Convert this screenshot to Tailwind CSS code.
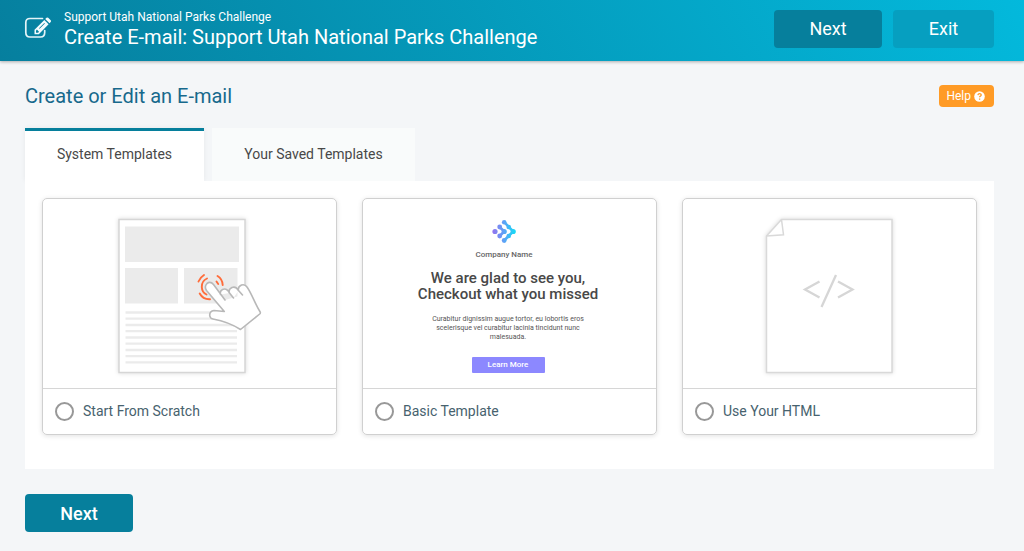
<!DOCTYPE html>
<html lang="en">
<head>
<meta charset="utf-8">
<meta name="viewport" content="width=device-width, initial-scale=1">
<title>Create E-mail</title>
<script src="https://cdn.jsdelivr.net/npm/@tailwindcss/browser@4"></script>
</head>
<body class="min-h-screen bg-[#f4f6f8] font-['Roboto',sans-serif] text-[#484848]">
<header class="flex h-[61px] items-center bg-linear-[60deg] from-[#067f9e] to-[#03b9dc] pr-[30px] pl-6 text-white shadow-[0_1px_3px_rgba(0,0,0,0.3)]">
  <svg class="mr-3 mb-1 h-7 w-7 shrink-0" viewBox="0 0 28 28" fill="none" aria-hidden="true">
    <path d="M18.500 3.500H6Q1.800 3.500 1.800 7.500V17.500Q1.800 22 6 22H16.500Q20.700 22 20.700 17.500V15.500" stroke="#e4f4f8" stroke-width="1.700" stroke-linecap="round"/>
    <path fill="#f3fbfd" fill-rule="evenodd" d="M10.500 19.300V14.800L20.300 5L24.600 9.300L14.800 19.300ZM12 15.700V17.700H14.100L15 16.700L12.900 14.600ZM15 13.200L20.300 8L20.900 8.600L15.600 13.800Z"/>
    <path fill="#f3fbfd" d="M21.200 4.100L22.500 2.800Q23.300 2 24.200 2.800L26.700 5.300Q27.500 6.100 26.700 7L25.500 8.300Z"/>
  </svg>
  <div class="flex-1">
    <p class="text-[12px] leading-4">Support Utah National Parks Challenge</p>
    <h1 class="mb-1 text-[20px] leading-6">Create E-mail: Support Utah National Parks Challenge</h1>
  </div>
  <div class="mb-1 flex gap-[11px] text-[18px]">
    <button type="button" class="h-[38px] w-[108px] rounded bg-[#067f9c]">Next</button>
    <button type="button" class="h-[38px] w-[101px] rounded bg-[#069fc0]">Exit</button>
  </div>
</header>

<main class="pt-[23px] pr-[30px] pb-[19px] pl-[25px]">
  <div class="flex items-center justify-between">
    <h2 class="text-[20px] leading-6 text-[#17698c]">Create or Edit an E-mail</h2>
    <button type="button" class="flex h-[22px] items-center gap-[3px] rounded bg-[#ff9b26] pr-[9px] pl-[7px] text-[12px] text-white">Help
      <svg class="h-[11px] w-[11px]" viewBox="0 0 11 11" fill="none" aria-hidden="true"><circle cx="5.500" cy="5.500" r="5.300" fill="#fff"/><path d="M3.900 4.200Q4.100 2.700 5.600 2.700Q7.200 2.700 7.200 4Q7.200 4.800 6.400 5.200Q5.600 5.600 5.600 6.300M5.600 7.500V8.700" stroke="#ff9b26" stroke-width="1.300"/></svg>
    </button>
  </div>

  <div role="tablist" class="mt-5 flex gap-2 text-[14px]">
    <button role="tab" aria-selected="true" type="button" class="h-[53px] w-[179px] border-t-3 border-[#067f9c] bg-white pb-[3px] shadow-[0_0_5px_rgba(0,0,0,0.06)]">System Templates</button>
    <button role="tab" aria-selected="false" type="button" class="h-[53px] w-[203px] bg-[#f9fbfb]">Your Saved Templates</button>
  </div>

  <section class="relative bg-white px-[17px] pt-[17px] pb-[34px]">
    <div class="grid grid-cols-3 gap-[25px]">
      <label class="rounded-[5px] border border-[#d0d0d0] shadow-[0_1px_5px_rgba(0,0,0,0.12)]">
        <span class="flex h-[189px] items-end justify-center pb-[3px]">
          <svg class="h-[180px] w-[180px]" viewBox="0 0 180 180" fill="none" aria-hidden="true">
            <path d="M19 14.500H145V167.500H19Z" fill="#fff" stroke="#d6d6d6" stroke-width="1.500" class="drop-shadow-[0_0_2px_rgba(0,0,0,0.15)]"/>
            <path d="M25 21.500H139V57H25ZM25 63H78V98.500H25ZM84 63H137.500V98.500H84Z" fill="#ebebeb"/>
            <path d="M25.500 107.500H137M25.500 113.700H137M25.500 120H137M25.500 126.200H137M25.500 132.500H137M25.500 138.700H137M25.500 145H137M25.500 151.200H137M25.500 157.400H137" stroke="#ebebeb" stroke-width="2.300"/>
            <path stroke="#ff6c3a" stroke-width="1.900" stroke-linecap="round" d="M98.500 76.500Q100 72.500 104 70M107 73.500Q101.500 76 101.800 82Q102 87.500 106.500 89.500M99.700 88.500Q103 94.500 110 94.200M117.500 71Q122.500 74 122.700 80M116.500 76.500L118.200 79"/>
            <path transform="translate(0 5)" d="M125 90L113.500 74.500Q110.500 71 107 73.500Q104 76.500 106.500 80.500L124.300 101.500L114 100.500Q109.500 101 109.700 105.500Q110 108.500 113 109Q129 112 140.500 119.500L159.700 104Q160.700 103 160.200 102C155 94 152 84 147 77Q145 74 141.500 75Q137.500 77 138.500 80.500L142.500 85M138.500 80.500Q136 76 132 77.500Q128 79.500 129.500 83L133.500 88M129.500 83Q126.500 77.500 122.500 79.500Q119.500 81 120.500 84.500" fill="#fff" stroke="#b8b8b8" stroke-width="1.600" stroke-linecap="round" stroke-linejoin="round"/>
          </svg>
        </span>
        <span class="flex h-[46px] items-center gap-[9px] border-t border-[#d6d6d6] pl-3 text-[14px] text-[#47626e]">
          <input type="radio" name="template" class="size-[19px] appearance-none rounded-full border-2 border-[#989898] bg-white checked:border-[6px]">Start From Scratch
        </span>
      </label>

      <label class="rounded-[5px] border border-[#d0d0d0] shadow-[0_1px_5px_rgba(0,0,0,0.12)]">
        <span class="flex h-[189px] flex-col items-center pt-5 pr-[3px] text-center">
          <svg class="mr-2 h-6 w-6" viewBox="0 0 24 24" fill="none" aria-hidden="true">
            <defs><linearGradient id="brand" x1="0" y1="12" x2="24" y2="12" gradientUnits="userSpaceOnUse"><stop stop-color="#9670ee"/><stop offset="0.500" stop-color="#5da2f6"/><stop offset="1" stop-color="#10def5"/></linearGradient></defs>
            <g fill="url(#brand)"><circle cx="3" cy="12.500" r="2.600"/><circle cx="7.700" cy="8" r="2.400"/><circle cx="7.700" cy="17" r="2.400"/><circle cx="12.200" cy="12.500" r="2.600"/><circle cx="12.200" cy="3.200" r="2.300"/><circle cx="12.200" cy="21.500" r="2.400"/><circle cx="16.700" cy="8" r="2.300"/><circle cx="16.700" cy="17" r="2.300"/><circle cx="21.200" cy="12.500" r="2.600"/></g>
            <path d="M7.700 8L12.200 12.500L7.700 17M12.200 3.200L21.200 12.500L12.200 21.500" stroke="url(#brand)" stroke-width="2.600"/>
          </svg>
          <span class="mt-1.5 mr-2 text-[8px] leading-3 font-medium text-[#666]">Company Name</span>
          <span class="mt-[9px] text-[15px] leading-4 font-medium text-[#484848]">We are glad to see you,<br>Checkout what you missed</span>
          <span class="mt-[13px] text-[7px] leading-[9px] text-[#555]">Curabitur dignissim augue tortor, eu lobortis eros<br>scelerisque vel curabitur lacinia tincidunt nunc<br>malesuada.</span>
          <span class="mt-[15px] flex h-4 w-[73px] items-center justify-center rounded-[1px] bg-[#8c88ff] text-[8px] font-medium text-white">Learn More</span>
        </span>
        <span class="flex h-[46px] items-center gap-[9px] border-t border-[#d6d6d6] pl-3 text-[14px] text-[#47626e]">
          <input type="radio" name="template" class="size-[19px] appearance-none rounded-full border-2 border-[#989898] bg-white checked:border-[6px]">Basic Template
        </span>
      </label>

      <label class="rounded-[5px] border border-[#d0d0d0] shadow-[0_1px_5px_rgba(0,0,0,0.12)]">
        <span class="flex h-[189px] items-end justify-center pb-[3px]">
          <svg class="h-[180px] w-[180px]" viewBox="0 0 180 180" fill="none" aria-hidden="true">
            <path d="M41.500 14.500H152V167.500H26.500V31Z" fill="#fff" stroke="#d9d9d9" stroke-width="1.500" class="drop-shadow-[0_0_2px_rgba(0,0,0,0.15)]"/>
            <path d="M41.500 14.500L43.500 29.700L26.500 31" stroke="#d9d9d9" stroke-width="1.500"/>
            <path d="M79.500 76.500L65 84.500L79.500 92.500M98 76.500L112.500 84.500L98 92.500M96 70L81.500 102" stroke="#d6d6d6" stroke-width="2.300"/>
          </svg>
        </span>
        <span class="flex h-[46px] items-center gap-[9px] border-t border-[#d6d6d6] pl-3 text-[14px] text-[#47626e]">
          <input type="radio" name="template" class="size-[19px] appearance-none rounded-full border-2 border-[#989898] bg-white checked:border-[6px]">Use Your HTML
        </span>
      </label>
    </div>
  </section>

  <button type="button" class="mt-[25px] h-[38px] w-[108px] rounded bg-[#067f9c] text-[18px] font-medium text-white">Next</button>
</main>
</body>
</html>
